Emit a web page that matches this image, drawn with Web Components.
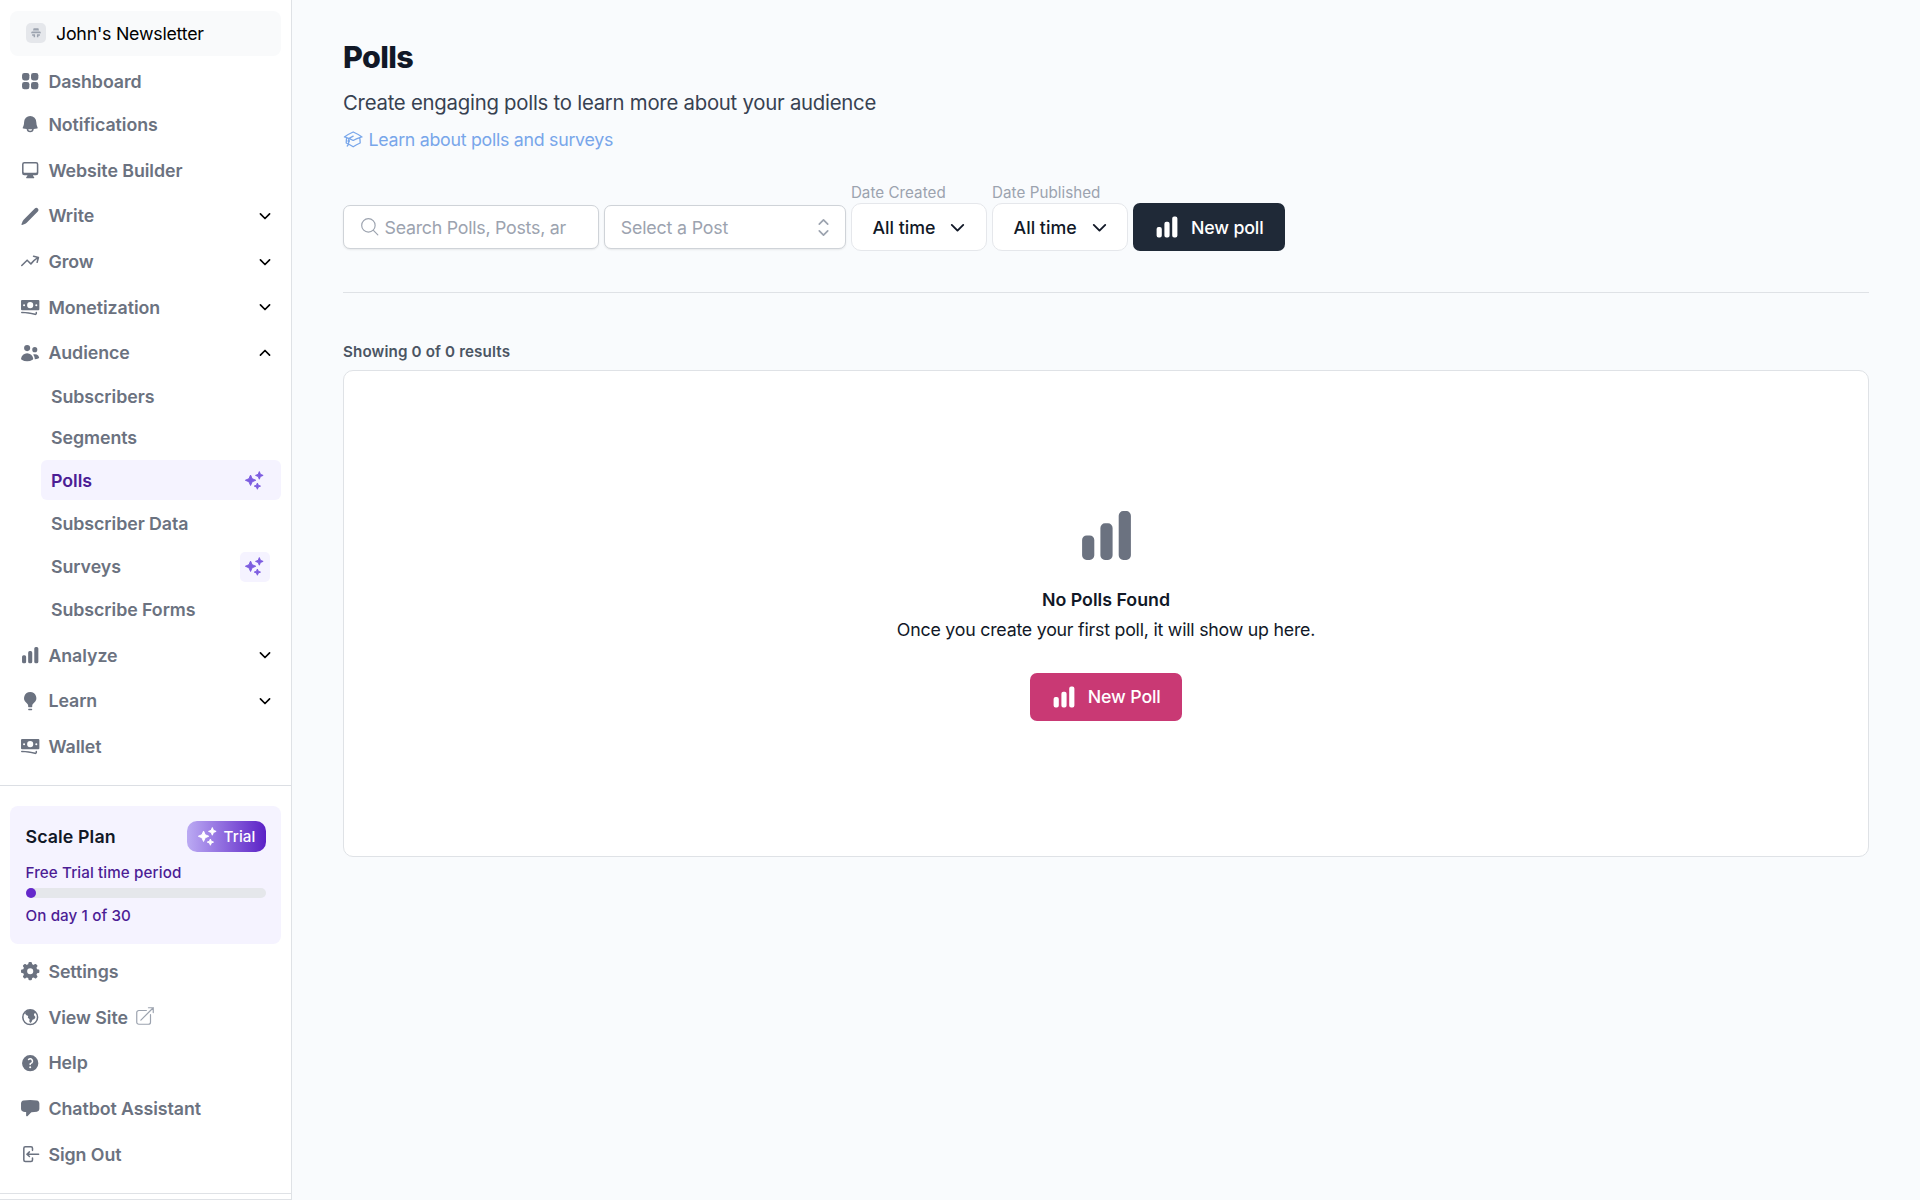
<!DOCTYPE html>
<html lang="en">
<head>
<meta charset="utf-8">
<title>Polls</title>
<style>
  body {
    margin: 0;
    font-family: Inter, "Liberation Sans", sans-serif;
    font-size: 17.8px;
    color: #111827;
    background: #f9fbfd;
    overflow: hidden;
  }
</style>
</head>
<body>
<news-app>
  <side-bar slot="sidebar">
    <site-switcher slot="top">John's Newsletter</site-switcher>
    <nav-item slot="nav" icon="squares" style="margin-top:5.5px">Dashboard</nav-item>
    <nav-item slot="nav" icon="bell" style="margin-top:2.5px">Notifications</nav-item>
    <nav-item slot="nav" icon="desktop">Website Builder</nav-item>
    <nav-item slot="nav" icon="pencil" chevron="down">Write</nav-item>
    <nav-item slot="nav" icon="trend" chevron="down">Grow</nav-item>
    <nav-item slot="nav" icon="cash" chevron="down">Monetization</nav-item>
    <nav-item slot="nav" icon="users" chevron="up">Audience</nav-item>
    <sub-item slot="nav">Subscribers</sub-item>
    <sub-item slot="nav" style="margin-top:.7px">Segments</sub-item>
    <sub-item slot="nav" active sparkle>Polls</sub-item>
    <sub-item slot="nav">Subscriber Data</sub-item>
    <sub-item slot="nav" sparkle>Surveys</sub-item>
    <sub-item slot="nav">Subscribe Forms</sub-item>
    <nav-item slot="nav" icon="bars" chevron="down">Analyze</nav-item>
    <nav-item slot="nav" icon="bulb" chevron="down">Learn</nav-item>
    <nav-item slot="nav" icon="cash">Wallet</nav-item>
    <plan-card slot="bottom" name="Scale Plan" badge="Trial" caption="Free Trial time period" day="1" total="30"></plan-card>
    <nav-item slot="bottom" icon="cog" style="margin-top:7.5px">Settings</nav-item>
    <nav-item slot="bottom" icon="globe" external>View Site</nav-item>
    <nav-item slot="bottom" icon="help">Help</nav-item>
    <nav-item slot="bottom" icon="chat">Chatbot Assistant</nav-item>
    <nav-item slot="bottom" icon="signout">Sign Out</nav-item>
  </side-bar>

  <page-header heading="Polls">
    Create engaging polls to learn more about your audience
    <span slot="link">Learn about polls and surveys</span>
  </page-header>
  <filter-bar>
    <search-field placeholder="Search Polls, Posts, ar"></search-field>
    <select-field>Select a Post</select-field>
    <date-filter label="Date Created">All time</date-filter>
    <date-filter label="Date Published">All time</date-filter>
    <poll-button>New poll</poll-button>
  </filter-bar>
  <poll-results summary="Showing 0 of 0 results">
    <empty-state heading="No Polls Found">
      Once you create your first poll, it will show up here.
      <poll-button slot="action" variant="primary">New Poll</poll-button>
    </empty-state>
  </poll-results>
</news-app>

<script>
  // 20x20 filled icons
  const SOLID = {
    squares: '<rect x="2" y="2" width="7.2" height="7.2" rx="2.25"/><rect x="10.8" y="2" width="7.2" height="7.2" rx="2.25"/><rect x="2" y="10.8" width="7.2" height="7.2" rx="2.25"/><rect x="10.8" y="10.8" width="7.2" height="7.2" rx="2.25"/>',
    bell: '<path d="M10 2a6 6 0 00-6 6c0 1.887-.454 3.665-1.257 5.234a.75.75 0 00.515 1.076 32.91 32.91 0 003.256.508 3.5 3.5 0 006.972 0 32.903 32.903 0 003.256-.508.75.75 0 00.515-1.076A11.448 11.448 0 0116 8a6 6 0 00-6-6zM8.05 14.943a33.54 33.54 0 003.9 0 2 2 0 01-3.9 0z"/>',
    desktop: '<path d="M2 4.25A2.25 2.25 0 014.25 2h11.5A2.25 2.25 0 0118 4.25v8.5A2.25 2.25 0 0115.75 15h-3.105a3.501 3.501 0 001.1 1.677A.75.75 0 0113.26 18H6.74a.75.75 0 01-.484-1.323A3.501 3.501 0 007.355 15H4.25A2.25 2.25 0 012 12.75v-8.5zm1.5 0a.75.75 0 01.75-.75h11.5a.75.75 0 01.75.75v7.5a.75.75 0 01-.75.75H4.25a.75.75 0 01-.75-.75v-7.5z"/>',
    pencil: '<path d="M2.695 14.763l-1.262 3.154a.5.5 0 00.65.65l3.155-1.262a4 4 0 001.343-.885L17.5 5.5a2.121 2.121 0 00-3-3L3.58 13.42a4 4 0 00-.885 1.343z"/>',
    trend: '<path d="M12.577 4.878a.75.75 0 01.919-.53l4.78 1.281a.75.75 0 01.531.919l-1.281 4.78a.75.75 0 01-1.449-.387l.81-3.022a19.407 19.407 0 00-5.594 5.203.75.75 0 01-1.139.093L7 10.06l-4.72 4.72a.75.75 0 01-1.06-1.061l5.25-5.25a.75.75 0 011.06 0l3.074 3.073a20.923 20.923 0 015.545-4.931l-3.042-.815a.75.75 0 01-.53-.919z"/>',
    cash: '<path d="M1 4a1 1 0 011-1h16a1 1 0 011 1v8a1 1 0 01-1 1H2a1 1 0 01-1-1V4zm12 4a3 3 0 11-6 0 3 3 0 016 0zM4 9a1 1 0 100-2 1 1 0 000 2zm13-1a1 1 0 11-2 0 1 1 0 012 0zM1.75 14.5a.75.75 0 000 1.5c4.417 0 8.693.603 12.749 1.73 1.111.309 2.251-.512 2.251-1.696v-.784a.75.75 0 00-1.5 0v.784a.272.272 0 01-.35.25A49.043 49.043 0 001.75 14.5z"/>',
    users: '<path d="M7 8a3 3 0 100-6 3 3 0 000 6zM14.5 9a2.5 2.5 0 100-5 2.5 2.5 0 000 5zM1.615 16.428a1.224 1.224 0 01-.569-1.175 6.002 6.002 0 0111.908 0c.058.467-.172.92-.57 1.174A9.953 9.953 0 017 18a9.953 9.953 0 01-5.385-1.572zM14.5 16h-.106c.07-.297.088-.611.048-.933a7.47 7.47 0 00-1.588-3.755 4.502 4.502 0 015.874 2.636.818.818 0 01-.36.98A7.465 7.465 0 0114.5 16z"/>',
    bars: '<path d="M15.5 2A1.5 1.5 0 0014 3.5v13a1.5 1.5 0 001.5 1.5h1a1.5 1.5 0 001.5-1.5v-13A1.5 1.5 0 0016.5 2h-1zM9.5 6A1.5 1.5 0 008 7.5v9A1.5 1.5 0 009.5 18h1a1.5 1.5 0 001.5-1.5v-9A1.5 1.5 0 0010.5 6h-1zM3.5 10A1.5 1.5 0 002 11.5v5A1.5 1.5 0 003.5 18h1A1.5 1.5 0 006 16.5v-5A1.5 1.5 0 004.5 10h-1z"/>',
    bulb: '<path d="M10 1a6 6 0 00-3.815 10.631C7.237 12.5 8 13.443 8 14.456v.644a.75.75 0 00.572.729 6.016 6.016 0 002.856 0A.75.75 0 0012 15.1v-.644c0-1.013.762-1.957 1.815-2.825A6 6 0 0010 1zM8.863 17.414a.75.75 0 00-.226 1.483 9.066 9.066 0 002.726 0 .75.75 0 00-.226-1.483 7.553 7.553 0 01-2.274 0z"/>',
    cog: '<path d="M8.34 1.804A1 1 0 019.32 1h1.36a1 1 0 01.98.804l.295 1.473c.497.144.971.342 1.416.587l1.25-.834a1 1 0 011.262.125l.962.962a1 1 0 01.125 1.262l-.834 1.25c.245.445.443.919.587 1.416l1.473.294a1 1 0 01.804.98v1.361a1 1 0 01-.804.98l-1.473.295a6.95 6.95 0 01-.587 1.416l.834 1.25a1 1 0 01-.125 1.262l-.962.962a1 1 0 01-1.262.125l-1.25-.834a6.953 6.953 0 01-1.416.587l-.294 1.473a1 1 0 01-.98.804H9.32a1 1 0 01-.98-.804l-.295-1.473a6.957 6.957 0 01-1.416-.587l-1.25.834a1 1 0 01-1.262-.125l-.962-.962a1 1 0 01-.125-1.262l.834-1.25a6.957 6.957 0 01-.587-1.416l-1.473-.294A1 1 0 011 10.68V9.32a1 1 0 01.804-.98l1.473-.295c.144-.497.342-.971.587-1.416l-.834-1.25a1 1 0 01.125-1.262l.962-.962A1 1 0 015.38 3.03l1.25.834a6.957 6.957 0 011.416-.587l.294-1.473zM13 10a3 3 0 11-6 0 3 3 0 016 0z"/>',
    globe: '<path d="M18 10a8 8 0 11-16 0 8 8 0 0116 0zm-1.5 0a6.5 6.5 0 11-13 0 6.5 6.5 0 0113 0z"/><path d="M5.5 4.5L9 3h4.5l1.8 2.4-1.6 1.4.2 1.5 1.3 1.4-1 2-1.9.8-1 2.2-1.2.9-1-1.4.3-2.2-1.7-1.5.3-1.7-1.6-.6L5 6.5z"/>',
    help: '<path d="M18 10a8 8 0 11-16 0 8 8 0 0116 0zM8.94 6.94a.75.75 0 11-1.061-1.061 3 3 0 112.871 5.026v.345a.75.75 0 01-1.5 0v-.5c0-.72.57-1.172 1.081-1.287A1.5 1.5 0 108.94 6.94zM10 15a1 1 0 100-2 1 1 0 000 2z"/>',
    chat: '<path d="M3.43 2.524A41.29 41.29 0 0110 2c2.236 0 4.43.18 6.57.524 1.437.231 2.43 1.49 2.43 2.902v5.148c0 1.413-.993 2.67-2.43 2.902a41.202 41.202 0 01-5.183.501.78.78 0 00-.528.224l-3.579 3.58A.75.75 0 016 17.25v-3.443a41.033 41.033 0 01-2.57-.33C1.993 13.244 1 11.986 1 10.573V5.426c0-1.413.993-2.67 2.43-2.902z"/>',
    signout: '<path d="M3 4.25A2.25 2.25 0 015.25 2h5.5A2.25 2.25 0 0113 4.25v2a.75.75 0 01-1.5 0v-2a.75.75 0 00-.75-.75h-5.5a.75.75 0 00-.75.75v11.5c0 .414.336.75.75.75h5.5a.75.75 0 00.75-.75v-2a.75.75 0 011.5 0v2A2.25 2.25 0 0110.75 18h-5.5A2.25 2.25 0 013 15.75V4.25z"/><path d="M19 10a.75.75 0 00-.75-.75H8.704l1.048-.943a.75.75 0 10-1.004-1.114l-2.5 2.25a.75.75 0 000 1.114l2.5 2.25a.75.75 0 101.004-1.114l-1.048-.943h9.546A.75.75 0 0019 10z"/>',
    sparkle: '<path d="M5.7 4.2L7.3 7.9 11 9.5 7.3 11.1 5.7 14.8 4.1 11.1.4 9.5 4.1 7.9zM14.7.6l1.1 2.8 2.8 1.1-2.8 1.1-1.1 2.8-1.1-2.8-2.8-1.1 2.8-1.1zM12.7 12.3l.9 2.3 2.3.9-2.3.9-.9 2.3-.9-2.3-2.3-.9 2.3-.9z" stroke="currentColor" stroke-width="1" stroke-linejoin="round"/>',
    hut: '<path d="M6 2h8l1 4H5zM3 7.5h14l1.5 3h-17zM3.5 12h5v5H6v-2.5H3.5zM11.5 12h5v2.5H14V17h-2.5z"/>'
  };
  // 24x24 outlined icons
  const OUTLINE = {
    chevron: '<path d="M6.5 9.500L12 15l5.500-5.500"/>',
    selector: '<path d="M8.25 15L12 18.75 15.75 15m-7.5-6L12 5.25 15.75 9"/>',
    search: '<path d="M21 21l-5.197-5.197m0 0A7.5 7.5 0 105.196 5.196a7.5 7.5 0 0010.607 10.607z"/>',
    external: '<path d="M13.5 6H5.25A2.25 2.25 0 003 8.25v10.5A2.25 2.25 0 005.25 21h10.5A2.25 2.25 0 0018 18.75V10.5m-10.5 6L21 3m0 0h-5.25M21 3v5.25"/>',
    cap: '<path d="M4.26 10.147a60.438 60.438 0 00-.491 6.347A48.62 48.62 0 0112 20.904a48.62 48.62 0 018.232-4.41 60.46 60.46 0 00-.491-6.347m-15.482 0a50.636 50.636 0 00-2.658-.813A59.906 59.906 0 0112 3.493a59.903 59.903 0 0110.399 5.84c-.896.248-1.783.52-2.658.814m-15.482 0A50.717 50.717 0 0112 13.489a50.702 50.702 0 017.74-3.342M6.75 15a.75.75 0 100-1.5.75.75 0 000 1.5zm0 0v-3.675A55.378 55.378 0 0112 8.443m-7.007 11.55A5.981 5.981 0 006.75 15.75v-1.5"/>'
  };

  class BaseElement extends HTMLElement {
    connectedCallback() {
      if (this.shadowRoot) return;
      this.attachShadow({ mode: 'open' });
      this.shadowRoot.innerHTML = this.render();
    }
    attr(name, fallback = '') {
      return this.getAttribute(name) ?? fallback;
    }
  }

  class UiIcon extends BaseElement {
    render() {
      const name = this.attr('name');
      const size = this.attr('size', '20.4');
      const svg = SOLID[name]
        ? `<svg viewBox="0 0 20 20" fill="currentColor" fill-rule="evenodd">${SOLID[name]}</svg>`
        : `<svg viewBox="0 0 24 24" fill="none" stroke="currentColor" stroke-width="${this.attr('weight', '1.5')}" stroke-linecap="round" stroke-linejoin="round">${OUTLINE[name]}</svg>`;
      return `
        <style>
          :host { display: block; flex: none; width: ${size}px; height: ${size}px; }
          svg { display: block; width: 100%; height: 100%; overflow: visible; }
        </style>
        ${svg}`;
    }
  }

  class NewsApp extends BaseElement {
    render() {
      return `
        <style>
          :host { display: flex; width: 100%; height: 1200px; }
          main { flex: 1; min-width: 0; padding: 35.5px 51px 0 51px; box-sizing: border-box; }
        </style>
        <slot name="sidebar"></slot>
        <main><slot></slot></main>`;
    }
  }

  class SideBar extends BaseElement {
    render() {
      return `
        <style>
          :host {
            display: flex;
            flex-direction: column;
            flex: none;
            box-sizing: border-box;
            width: 292px;
            height: 1200px;
            background: #fff;
            border-right: 1px solid #dfe2e6;
          }
          nav, .bottom { padding: 0 10.5px 0 10px; }
          nav { height: 785px; padding-top: 10.5px; box-sizing: border-box; }
          .bottom {
            flex: 1;
            border-top: 1px solid #dcdfe4;
            padding-top: 20px;
          }
          footer { height: 5px; border: solid #dfe2e6; border-width: 1px 0; }
        </style>
        <nav><slot name="top"></slot><slot name="nav"></slot></nav>
        <div class="bottom"><slot name="bottom"></slot></div>
        <footer></footer>`;
    }
  }

  class SiteSwitcher extends BaseElement {
    render() {
      return `
        <style>
          :host {
            display: flex;
            align-items: center;
            gap: 10.5px;
            height: 45px;
            padding: 0 15.5px;
            box-sizing: border-box;
            border-radius: 8px;
            background: #f9fafb;
            color: #000;
            letter-spacing: -.23px;
          }
          .avatar {
            display: grid;
            place-items: center;
            width: 20px;
            height: 20px;
            border-radius: 5px;
            background: #e5e7eb;
            color: #9ca3af;
          }
        </style>
        <span class="avatar"><ui-icon name="hut" size="12"></ui-icon></span>
        <slot></slot>`;
    }
  }

  class NavItem extends BaseElement {
    render() {
      const chevron = this.attr('chevron');
      return `
        <style>
          :host {
            display: flex;
            align-items: center;
            height: 40.7px;
            margin-top: 5px;
            padding: 0 5.5px 0 10px;
            color: #6b7280;
            font-weight: 600;
            letter-spacing: -.06px;
          }
          .label { margin-left: 8px; }
          .external { margin-left: 6px; margin-top: -2px; color: #9ca3af; }
          .chevron { margin-left: auto; color: #000; }
          .up { transform: rotate(180deg); }
        </style>
        <ui-icon name="${this.attr('icon')}"></ui-icon>
        <span class="label"><slot></slot></span>
        ${this.hasAttribute('external') ? '<ui-icon class="external" name="external" size="22" weight="1.3"></ui-icon>' : ''}
        ${chevron ? `<ui-icon class="chevron ${chevron}" name="chevron" size="20" weight="2"></ui-icon>` : ''}`;
    }
  }

  class SubItem extends BaseElement {
    render() {
      return `
        <style>
          :host {
            display: flex;
            align-items: center;
            justify-content: space-between;
            height: 40px;
            margin: 3.2px 0 0 30.5px;
            padding: 0 10.5px;
            border-radius: 6px;
            color: #6b7280;
            font-weight: 600;
            letter-spacing: -.06px;
          }
          :host([active]) { background: #f5f3ff; color: #4c1d95; }
          .sparkle {
            display: grid;
            place-items: center;
            width: 30px;
            height: 30px;
            border-radius: 5px;
            background: #f5f3ff;
            color: #7c5ce0;
          }
        </style>
        <slot></slot>
        ${this.hasAttribute('sparkle') ? '<span class="sparkle"><ui-icon name="sparkle" size="19.5"></ui-icon></span>' : ''}`;
    }
  }

  class PlanCard extends BaseElement {
    render() {
      const day = this.attr('day');
      const total = this.attr('total');
      return `
        <style>
          :host {
            display: block;
            height: 137.5px;
            padding: 15px 15px 15px 15.5px;
            box-sizing: border-box;
            border-radius: 8px;
            background: #f5f3ff;
            color: #4c1d95;
            font-size: 15.2px;
            font-weight: 500;
            line-height: 20px;
            letter-spacing: .1px;
          }
          .top { display: flex; align-items: center; justify-content: space-between; height: 31px; }
          .name { color: #111827; font-size: 17.8px; font-weight: 600; }
          .badge {
            display: flex;
            align-items: center;
            gap: 6px;
            height: 30.5px;
            padding: 0 10px 0 11px;
            border-radius: 10px;
            color: #fff;
            background: linear-gradient(90deg, #bbaaf3, #5b21c6);
          }
          .caption { margin-top: 10.5px; }
          .track { height: 10px; margin: 5px 0 8px; border-radius: 5px; background: #e5e7eb; }
          .fill { width: calc(100% * ${day} / ${total} + 2px); height: 10px; border-radius: 5px; background: #6428cb; }
        </style>
        <div class="top">
          <span class="name">${this.attr('name')}</span>
          <span class="badge"><ui-icon name="sparkle" size="19.5"></ui-icon>${this.attr('badge')}</span>
        </div>
        <div class="caption">${this.attr('caption')}</div>
        <div class="track"><div class="fill"></div></div>
        <div>On day ${day} of ${total}</div>`;
    }
  }

  class PageHeader extends BaseElement {
    render() {
      return `
        <style>
          :host { display: block; height: 145px; }
          h1 { margin: 0; font-size: 30.5px; line-height: 41px; font-weight: 760; letter-spacing: -.6px; }
          p { margin: 12px 0 0; font-size: 20.35px; line-height: 28px; letter-spacing: -.25px; color: #374151; }
          .link { display: flex; align-items: center; gap: 5px; margin-top: 10.5px; line-height: 25px; letter-spacing: -.28px; color: #78a6ea; }
        </style>
        <h1>${this.attr('heading')}</h1>
        <p><slot></slot></p>
        <div class="link"><ui-icon name="cap" size="20.4"></ui-icon><slot name="link"></slot></div>`;
    }
  }

  class FilterBar extends BaseElement {
    render() {
      return `
        <style>
          :host {
            display: flex;
            align-items: flex-end;
            gap: 5.2px;
            height: 112.5px;
            padding-bottom: 41px;
            box-sizing: border-box;
            border-bottom: 1px solid #dfe2e6;
          }
        </style>
        <slot></slot>`;
    }
  }

  const fieldStyles = `
    :host {
      display: flex;
      align-items: center;
      height: 44px;
      margin-bottom: 2px;
      box-sizing: border-box;
      border: 1px solid #cfd3d8;
      border-radius: 7px;
      background: #fff;
      color: #9ca3af;
      box-shadow: 0 1px 2px rgba(0, 0, 0, .08);
    }
  `;

  class SearchField extends BaseElement {
    render() {
      return `
        <style>
          ${fieldStyles}
          :host { width: 256px; padding-left: 15px; gap: 4px; letter-spacing: -.25px; }
        </style>
        <ui-icon name="search" size="21.5" weight="1.3"></ui-icon>
        <span>${this.attr('placeholder')}</span>`;
    }
  }

  class SelectField extends BaseElement {
    render() {
      return `
        <style>
          ${fieldStyles}
          :host { width: 241.5px; padding: 0 8px 0 15.5px; justify-content: space-between; letter-spacing: -.15px; }
        </style>
        <slot></slot>
        <ui-icon name="selector" size="27"></ui-icon>`;
    }
  }

  class DateFilter extends BaseElement {
    render() {
      return `
        <style>
          :host { display: block; width: 136px; white-space: nowrap; }
          label { display: block; font-size: 15.2px; line-height: 20px; letter-spacing: .03px; color: #9ca3af; margin-bottom: 0; }
          .control {
            display: flex;
            align-items: center;
            justify-content: space-between;
            height: 48px;
            box-sizing: border-box;
            padding: 0 15.5px 0 20.5px;
            border: 1px solid #e5e7eb;
            border-radius: 10px;
            background: #fff;
            font-weight: 500;
          }
        </style>
        <label>${this.attr('label')}</label>
        <div class="control"><slot></slot><ui-icon name="chevron" size="25" weight="1.8"></ui-icon></div>`;
    }
  }

  class PollButton extends BaseElement {
    render() {
      return `
        <style>
          :host {
            display: inline-flex;
            align-items: center;
            justify-content: center;
            gap: 10.5px;
            width: 151.5px;
            height: 48px;
            border-radius: 7px;
            background: #1f2937;
            color: #fff;
            font-weight: 500;
            letter-spacing: -.15px;
          }
          :host([variant="primary"]) { background: #c93974; }
        </style>
        <ui-icon name="bars" size="26"></ui-icon>
        <slot></slot>`;
    }
  }

  class PollResults extends BaseElement {
    render() {
      return `
        <style>
          :host { display: block; padding-top: 47.5px; }
          .summary { font-size: 15.2px; font-weight: 600; line-height: 22px; letter-spacing: .13px; color: #4b5563; }
          .panel {
            display: grid;
            place-items: center;
            height: 487px;
            margin-top: 7.5px;
            box-sizing: border-box;
            border: 1px solid #dfe2e6;
            border-radius: 10px;
            background: #fff;
          }
        </style>
        <div class="summary">${this.attr('summary')}</div>
        <div class="panel"><slot></slot></div>`;
    }
  }

  class EmptyState extends BaseElement {
    render() {
      return `
        <style>
          :host { display: flex; flex-direction: column; align-items: center; line-height: 26px; padding-bottom: 1px; }
          .icon { color: #6b7280; }
          .heading { margin-top: 20.5px; font-weight: 600; }
          .text { margin-top: 4px; letter-spacing: -.23px; }
          .action { display: flex; margin-top: 30px; }
        </style>
        <ui-icon class="icon" name="bars" size="61"></ui-icon>
        <div class="heading">${this.attr('heading')}</div>
        <div class="text"><slot></slot></div>
        <div class="action"><slot name="action"></slot></div>`;
    }
  }

  customElements.define('ui-icon', UiIcon);
  customElements.define('news-app', NewsApp);
  customElements.define('side-bar', SideBar);
  customElements.define('site-switcher', SiteSwitcher);
  customElements.define('nav-item', NavItem);
  customElements.define('sub-item', SubItem);
  customElements.define('plan-card', PlanCard);
  customElements.define('page-header', PageHeader);
  customElements.define('filter-bar', FilterBar);
  customElements.define('search-field', SearchField);
  customElements.define('select-field', SelectField);
  customElements.define('date-filter', DateFilter);
  customElements.define('poll-button', PollButton);
  customElements.define('poll-results', PollResults);
  customElements.define('empty-state', EmptyState);
</script>
</body>
</html>
